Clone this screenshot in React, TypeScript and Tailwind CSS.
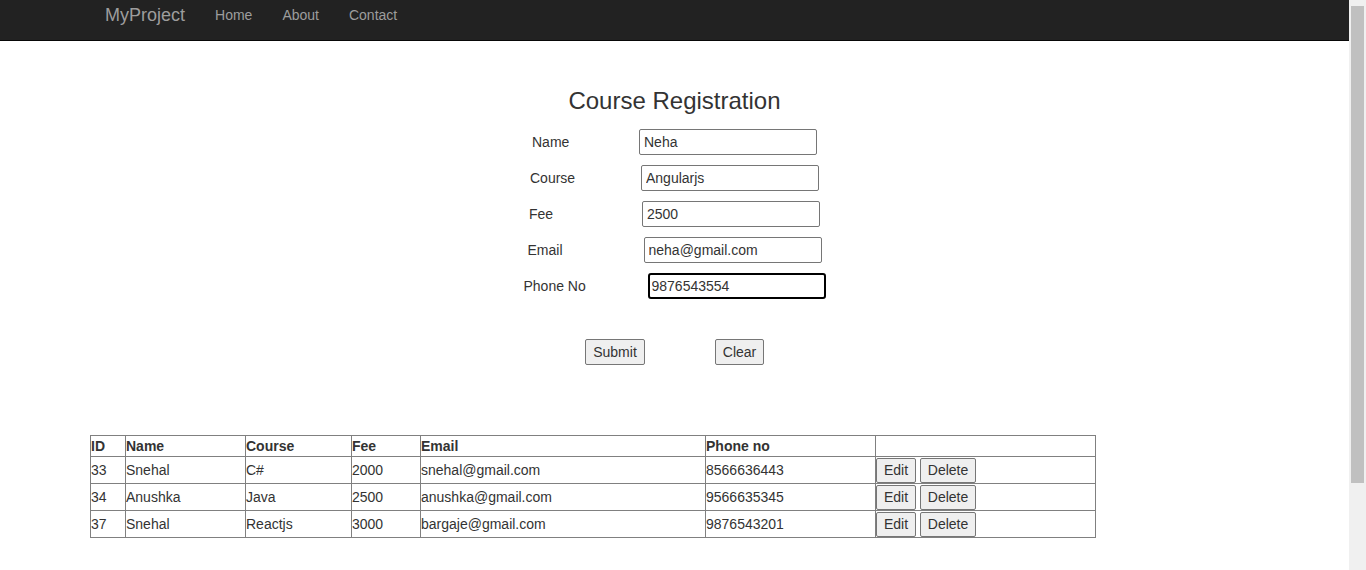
import React from 'react';

type Student = {
  id: number;
  name: string;
  course: string;
  fee: number;
  email: string;
  phone: string;
};

const students: Student[] = [
  { id: 33, name: 'Snehal', course: 'C#', fee: 2000, email: 'snehal@gmail.com', phone: '8566636443' },
  { id: 34, name: 'Anushka', course: 'Java', fee: 2500, email: 'anushka@gmail.com', phone: '9566635345' },
  { id: 37, name: 'Snehal', course: 'Reactjs', fee: 3000, email: 'bargaje@gmail.com', phone: '9876543201' },
];

// label box widths are uneven in the original form, keep them that way
const fields = [
  { label: 'Name', value: 'Neha', labelWidth: 'w-[107px]', focused: false },
  { label: 'Course', value: 'Angularjs', labelWidth: 'w-[111px]', focused: false },
  { label: 'Fee', value: '2500', labelWidth: 'w-[113px]', focused: false },
  { label: 'Email', value: 'neha@gmail.com', labelWidth: 'w-[116px]', focused: false },
  { label: 'Phone No', value: '9876543554', labelWidth: 'w-[124px]', focused: true },
];

function Navbar() {
  return (
    <nav className="h-[41px] bg-[#222222] border-b border-[#080808]">
      <div className="flex items-center h-[30px] pl-[105px]">
        <span className="text-[18px] text-[#9d9d9d]">MyProject</span>
        <ul className="flex ml-[15px] text-[14px] text-[#9d9d9d]">
          <li className="px-[15px]">Home</li>
          <li className="px-[15px]">About</li>
          <li className="px-[15px]">Contact</li>
        </ul>
      </div>
    </nav>
  );
}

function RegistrationForm() {
  return (
    <div className="flex flex-col items-center">
      <h3 className="mt-[47px] text-[24px] leading-[26px] text-[#333333]">Course Registration</h3>
      <div className="flex flex-col gap-[10px] mt-[15px]">
        {fields.map((f) => (
          <div key={f.label} className="flex justify-center items-center h-[26px]">
            <label className={`${f.labelWidth} text-[14px] text-[#333333]`}>{f.label}</label>
            <input
              type="text"
              defaultValue={f.value}
              readOnly
              className={
                f.focused
                  ? 'w-[178px] h-[26px] px-[2px] text-[14px] text-[#333333] bg-white border-2 border-black rounded-[3px] outline-none'
                  : 'w-[178px] h-[26px] px-[4px] text-[14px] text-[#333333] bg-white border border-[#767676] rounded-[2px] outline-none'
              }
            />
          </div>
        ))}
      </div>
      <div className="flex gap-[70px] mt-[40px]">
        <button className="w-[60px] h-[26px] text-[14px] text-[#333333] bg-[#efefef] border border-[#767676] rounded-[2px]">
          Submit
        </button>
        <button className="w-[49px] h-[26px] text-[14px] text-[#333333] bg-[#efefef] border border-[#767676] rounded-[2px]">
          Clear
        </button>
      </div>
    </div>
  );
}

function StudentTable() {
  return (
    <div className="pl-[90px] mt-[70px]">
      <table className="table-fixed border-collapse w-[1005px] text-[14px] text-[#333333]">
        <colgroup>
          <col className="w-[35px]" />
          <col className="w-[120px]" />
          <col className="w-[106px]" />
          <col className="w-[69px]" />
          <col className="w-[285px]" />
          <col className="w-[170px]" />
          <col className="w-[220px]" />
        </colgroup>
        <thead>
          <tr className="h-[21px]">
            {['ID', 'Name', 'Course', 'Fee', 'Email', 'Phone no', ''].map((h, i) => (
              <th key={i} className="border border-[#808080] p-0 text-left font-bold leading-[20px]">
                {h}
              </th>
            ))}
          </tr>
        </thead>
        <tbody>
          {students.map((s) => (
            <tr key={s.id} className="h-[27px]">
              <td className="border border-[#808080] p-0">{s.id}</td>
              <td className="border border-[#808080] p-0">{s.name}</td>
              <td className="border border-[#808080] p-0">{s.course}</td>
              <td className="border border-[#808080] p-0">{s.fee}</td>
              <td className="border border-[#808080] p-0">{s.email}</td>
              <td className="border border-[#808080] p-0">{s.phone}</td>
              <td className="border border-[#808080] p-0">
                <div className="flex items-center gap-[4px]">
                  <button className="w-[40px] h-[25px] text-[14px] text-[#333333] bg-[#efefef] border border-[#767676] rounded-[2px]">
                    Edit
                  </button>
                  <button className="w-[56px] h-[25px] text-[14px] text-[#333333] bg-[#efefef] border border-[#767676] rounded-[2px]">
                    Delete
                  </button>
                </div>
              </td>
            </tr>
          ))}
        </tbody>
      </table>
    </div>
  );
}

function Scrollbar() {
  return (
    <div className="w-[17px] shrink-0 bg-[#f0f0f0]">
      <div className="mt-[6px] mx-[2px] h-[477px] bg-[#c0c0c0]" />
    </div>
  );
}

export default function App() {
  return (
    <div className="flex h-[570px] overflow-hidden bg-white font-['Liberation_Sans',Arial,sans-serif]">
      <div className="flex-1 min-w-0">
        <Navbar />
        <RegistrationForm />
        <StudentTable />
      </div>
      <Scrollbar />
    </div>
  );
}
